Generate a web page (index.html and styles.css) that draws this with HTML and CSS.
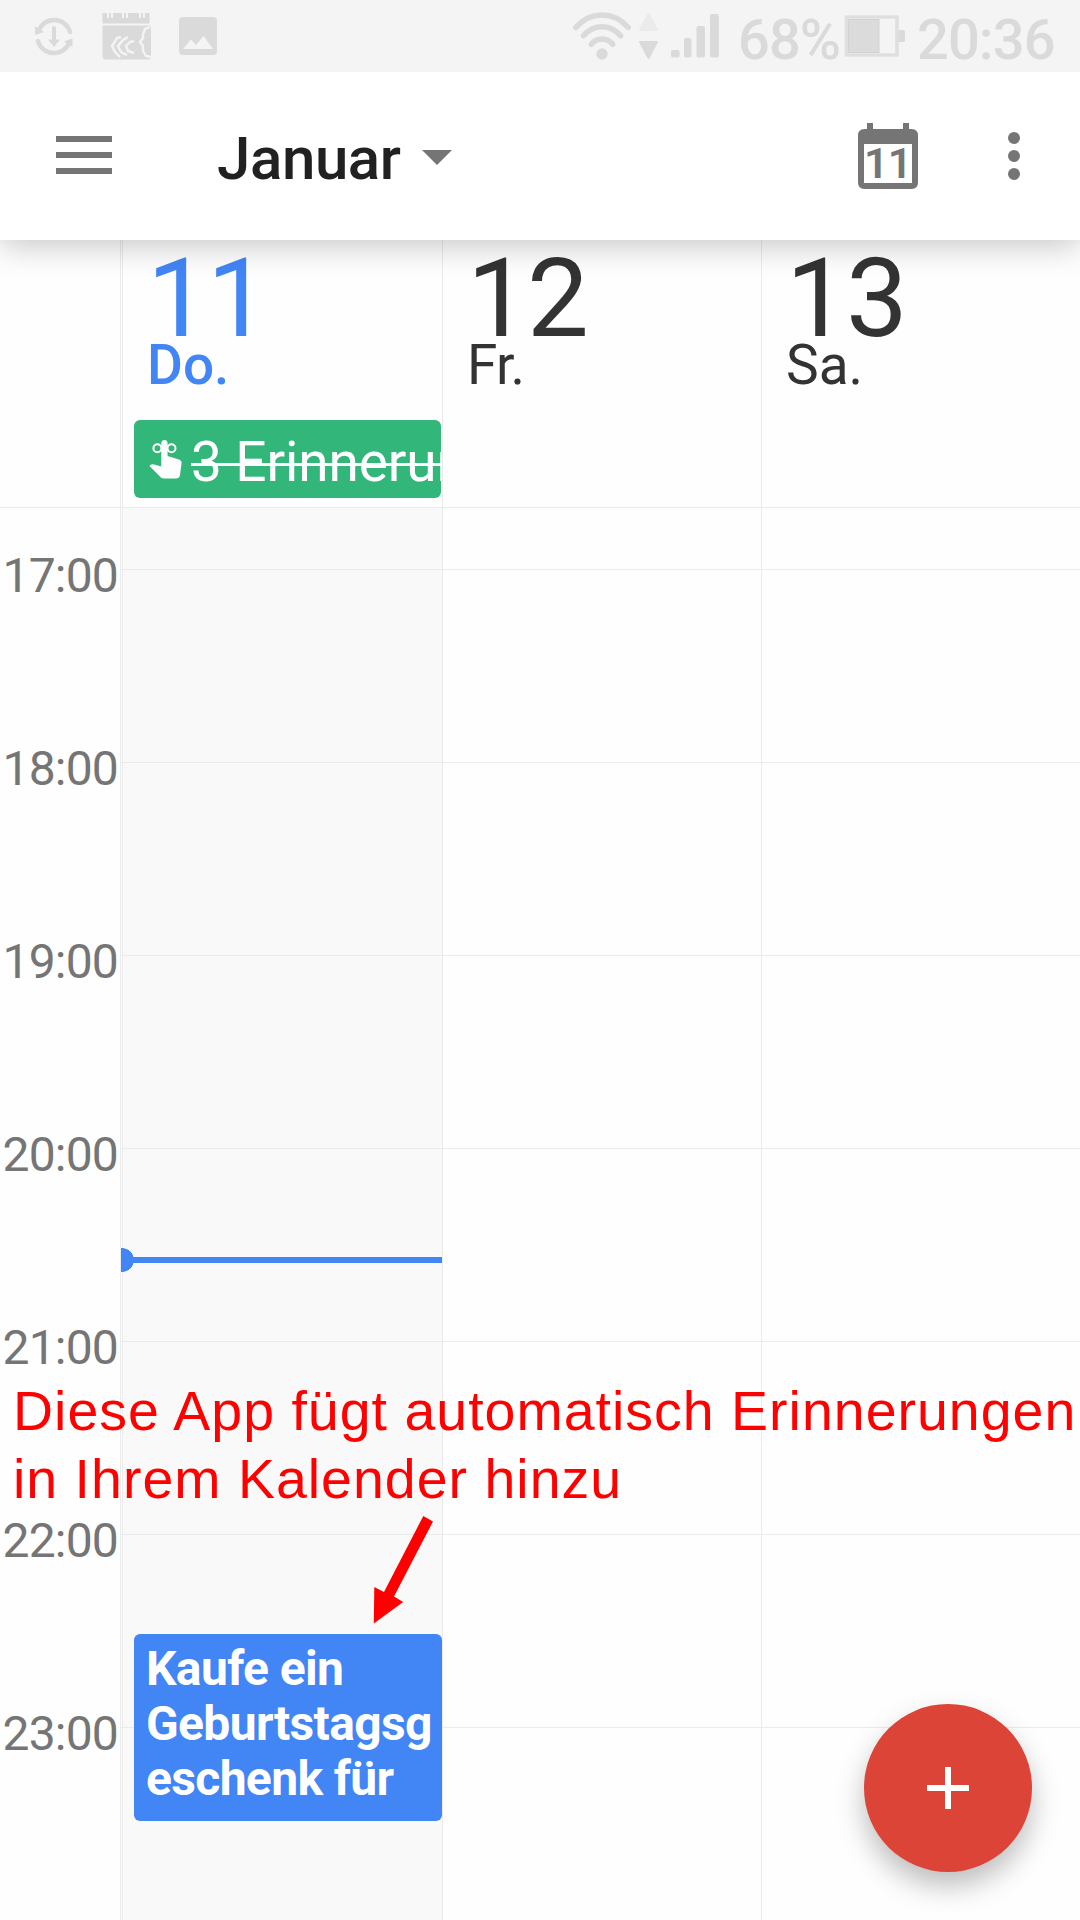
FILE: index.html
```html
<!DOCTYPE html>
<html lang="de">
<head>
<meta charset="utf-8">
<title>Kalender</title>
<link rel="stylesheet" href="styles.css">
</head>
<body>
<div class="screen">
  <header class="status-bar">
    <svg class="status-icons" width="260" height="72" viewBox="0 0 260 72" fill="#dadada">
      <g fill="none" stroke="#dadada" stroke-width="4.500" stroke-linecap="round">
        <path d="M38.500 31A16.500 16.500 0 0 1 70 32"/>
        <path d="M38 41A16.500 16.500 0 0 0 69.500 42"/>
        <path d="M54 28V42" stroke-width="4"/>
      </g>
      <path d="M35 26.500L44 32L35 35z"/>
      <path d="M72.500 38.500L64 41.500L72.500 47z"/>
      <path d="M48 39.500H60L54 47z"/>
      <path d="M102.500 13H107V18H109V13H111V18H113V13H122V18H124V13H126V18H128V13H139V18H141V13H143V18H145V13H149.500V23.500H102.500z"/>
      <path d="M102.500 25.500H149.500L151 27V57Q151 59.500 148 59.500H106Q102.500 59.500 102.500 56z"/>
      <g fill="none" stroke="#f4f4f4" stroke-width="2.400">
        <path d="M121 37L117 38L112 46L115 52L120 57M128 37L123 40L118 46L121 52L127 55M134 41L130 42L126 46L128 51L134 53"/>
        <path d="M150 27L145 29L143 34V38L140 42L143 46V51L146 56L151 57"/>
      </g>
      <rect x="179" y="17" width="38" height="38" rx="4"/>
      <path d="M183 49L191 39.500L196 45L203.500 36L213 49z" fill="#f4f4f4"/>
    </svg>
    <div class="status-right">
      <svg width="160" height="72" viewBox="570 0 160 72" fill="#dadada">
        <g fill="none" stroke="#dadada" stroke-width="5.500" stroke-linecap="round">
          <path d="M575.800 27.500Q587 15 602 15T628.200 27.500"/>
          <path d="M583.500 35.800Q591 26.800 602 26.800T620.500 35.800"/>
          <path d="M591.300 44.300Q595.500 39 602 39T612.700 44.300"/>
        </g>
        <circle cx="602" cy="54" r="5.700"/>
        <path d="M648.500 14L657 30H640z" fill="#ebebeb" stroke="#ebebeb" stroke-width="2" stroke-linejoin="round"/>
        <path d="M648.500 58L657 42H640z" stroke="#dadada" stroke-width="2" stroke-linejoin="round"/>
        <rect x="671" y="50" width="8.500" height="7.500" rx="2"/>
        <rect x="684" y="38" width="7.500" height="19.500" rx="2"/>
        <rect x="696.500" y="26" width="8.500" height="31.500" rx="2"/>
        <rect x="710" y="14" width="8.800" height="43.500" rx="2"/>
      </svg>
      <span class="status-text battery-level">68%</span>
      <svg class="battery" width="62" height="72" viewBox="844 0 62 72">
        <path d="M846.500 17H897V55H846.500z" fill="none" stroke="#dfdfdf" stroke-width="3.600"/>
        <rect x="848.500" y="19.500" width="30.500" height="33" fill="#dbdbdb" stroke="#d2d2d2" stroke-width="1"/>
        <rect x="898.500" y="30" width="6.500" height="12" rx="1.500" fill="#dadada"/>
      </svg>
      <span class="status-text clock">20:36</span>
    </div>
  </header>

  <nav class="app-bar">
    <svg class="menu" width="56" height="38" viewBox="0 0 56 38" fill="#757575">
      <path d="M0 0H56V6H0zM0 16H56V22H0zM0 32H56V38H0z"/>
    </svg>
    <h1 class="month">Januar</h1>
    <svg class="caret" width="30" height="15" viewBox="0 0 30 15" fill="#757575"><path d="M0 0H30L15 15z"/></svg>
    <svg class="today-icon" width="60" height="66" viewBox="0 0 60 66">
      <path fill="#757575" fill-rule="evenodd" d="M9 0H15V6H45V0H51V6H53.500Q60 6 60 12.500V59.500Q60 66 53.500 66H6.500Q0 66 0 59.500V12.500Q0 6 6.500 6H9zM6 21V60H54V21z"/>
      <text x="6" y="55" class="today-number">11</text>
    </svg>
    <svg class="more" width="12" height="48" viewBox="0 0 12 48" fill="#757575">
      <circle cx="6" cy="6" r="6"/><circle cx="6" cy="24" r="6"/><circle cx="6" cy="42" r="6"/>
    </svg>
  </nav>

  <section class="days">
    <div class="gutter"></div>
    <div class="strip"></div>
    <div class="day today">
      <div class="number">11</div>
      <div class="weekday">Do.</div>
      <div class="all-day">
        <svg width="34" height="40" viewBox="0 0 34 40" fill="#fff">
          <path d="M12.300 21V4.500Q12.300 1 15.500 1T18.600 4.500V17L30 20.500Q33 21.500 32.500 24.500L31 36Q30.500 39.500 27 39.500H15Q12 39.500 10.500 37L0.500 27Q2 24.500 5 25.500L12.300 27.500z"/>
          <g fill="none" stroke="#fff" stroke-width="2"><circle cx="8.400" cy="9.300" r="4"/><circle cx="22.500" cy="9.300" r="4"/></g>
        </svg>
        <span class="all-day-text">3 Erinnerungen</span>
      </div>
    </div>
    <div class="day">
      <div class="number">12</div>
      <div class="weekday friday">Fr.</div>
    </div>
    <div class="day">
      <div class="number">13</div>
      <div class="weekday">Sa.</div>
    </div>
  </section>

  <main class="timeline">
    <div class="gutter hours">
      <div>17:00</div><div>18:00</div><div>19:00</div><div>20:00</div><div>21:00</div><div>22:00</div><div>23:00</div>
    </div>
    <div class="strip lines"></div>
    <div class="column lines today-column"></div>
    <div class="column lines"></div>
    <div class="column lines"></div>
    <div class="now"></div>
    <div class="event">Kaufe ein<br>Geburtstagsg<br>eschenk für</div>
  </main>

  <p class="note">Diese App fügt automatisch Erinnerungen<br>in Ihrem Kalender hinzu</p>
  <svg class="arrow" width="60" height="108" viewBox="374 1516 60 108" fill="#f00">
    <path d="M423.300 1516L433 1521.500L394 1596.500L403.200 1602L373.800 1623.500L374.300 1587L384 1592z"/>
  </svg>
  <button class="fab" aria-label="Neu">
    <svg width="42" height="42" viewBox="0 0 42 42" fill="#fff"><path d="M18 0H24V18H42V24H24V42H18V24H0V18H18z"/></svg>
  </button>
</div>
</body>
</html>
```
FILE: styles.css
```css
* { box-sizing: border-box; }
body { margin: 0; font-family: Roboto, "Liberation Sans", sans-serif; background: #fff; }

.screen {
  position: relative;
  display: flex;
  flex-direction: column;
  width: 1080px;
  height: 1920px;
  overflow: hidden;
  background: #fefefe;
}

.status-bar {
  position: relative;
  z-index: 2;
  display: flex;
  justify-content: space-between;
  flex: none;
  height: 72px;
  background: #f4f4f4;
}
.status-right { display: flex; width: 510px; }
.status-right svg { flex: none; }
.status-text {
  flex: none;
  font-size: 56px;
  font-weight: 500;
  line-height: 72px;
  padding-top: 4px;
  letter-spacing: -.9px;
  color: #dadada;
  white-space: nowrap;
}
.battery-level { width: 106px; margin-left: 8px; }
.clock { margin-left: 11px; }

.app-bar {
  position: relative;
  z-index: 1;
  display: flex;
  align-items: flex-start;
  flex: none;
  height: 168px;
  padding: 0 60px 0 56px;
  background: #fff;
  box-shadow: 0 6px 30px rgba(0, 0, 0, .22);
}
.menu { margin-top: 64px; }
.month {
  width: 186px;
  margin: 51px 0 0 105px;
  font-size: 60px;
  font-weight: 500;
  line-height: 72px;
  letter-spacing: -.4px;
  color: #212121;
}
.caret { margin: 78px 0 0 19px; }
.today-icon { margin: 51px 0 0 auto; }
.today-number { font-size: 43px; font-weight: 600; letter-spacing: -.7px; fill: #757575; }
.more { margin: 60px 0 0 90px; }

.days, .timeline {
  display: grid;
  grid-template-columns: 121px 2px 320px 319px 318px;
}
.days { flex: none; height: 268px; border-bottom: 1px solid #ebebeb; }
.gutter, .strip, .day, .column { border-right: 1px solid #ebebeb; }
.day:last-child { border-right: 0; }
.day { padding: 0 0 0 24px; color: #333; min-width: 0; }
.number { height: 93px; padding-top: 9px; font-size: 110px; line-height: 100px; letter-spacing: -1.8px; }
.weekday { font-size: 55px; line-height: 64px; }
.friday { letter-spacing: -.8px; }
.today .number, .today .weekday { color: #4285f4; }
.today .weekday { font-weight: 500; }
.all-day {
  display: flex;
  align-items: flex-start;
  width: 307px;
  height: 78px;
  margin: 23px 0 0 -13px;
  padding: 19px 0 0 15px;
  border-radius: 6px;
  overflow: hidden;
  background: #33b679;
  color: #fff;
}
.all-day svg { flex: none; }
.all-day-text {
  margin: -9px 0 0 8px;
  font-size: 55px;
  line-height: 64px;
  letter-spacing: -.12px;
  white-space: nowrap;
  text-decoration: line-through;
  text-decoration-thickness: 3px;
}

.timeline { position: relative; flex: 1; }
.hours { padding-top: 40px; }
.hours div {
  height: 193px;
  padding-right: 2px;
  font-size: 48px;
  line-height: 56px;
  letter-spacing: -.8px;
  text-align: right;
  color: #757575;
}
.lines {
  background-image: linear-gradient(#ebebeb 1px, transparent 1px);
  background-size: 100% 193px;
  background-position: 0 61px;
  background-repeat: repeat-y;
}
.column:nth-child(5) { border-right: 0; }
.today-column { background-color: #f9f9f9; }

.now {
  position: absolute;
  left: 121px;
  top: 740px;
  width: 321px;
  height: 24px;
  background:
    radial-gradient(circle at 1px 12px, #4285f4 11.5px, transparent 12.2px),
    linear-gradient(#4285f4, #4285f4) 0 9px / 100% 6px no-repeat;
}
.event {
  position: absolute;
  left: 134px;
  top: 1126px;
  width: 308px;
  height: 187px;
  padding: 7px 12px;
  border-radius: 6px;
  background: #4285f4;
  color: #fff;
  font-size: 48px;
  font-weight: 700;
  line-height: 55px;
  letter-spacing: -.65px;
  white-space: nowrap;
}

.note {
  position: absolute;
  left: 13px;
  top: 1378px;
  margin: 0;
  font-family: "Liberation Sans", Arial, sans-serif;
  font-size: 55.5px;
  line-height: 67.5px;
  letter-spacing: 1px;
  white-space: nowrap;
  color: #f00;
}
.arrow { position: absolute; left: 374px; top: 1516px; overflow: visible; }

.fab {
  position: absolute;
  left: 864px;
  top: 1704px;
  display: flex;
  align-items: center;
  justify-content: center;
  width: 168px;
  height: 168px;
  padding: 0;
  border: 0;
  border-radius: 50%;
  background: #db4437;
  box-shadow: 0 14px 28px rgba(0, 0, 0, .26);
}
```
